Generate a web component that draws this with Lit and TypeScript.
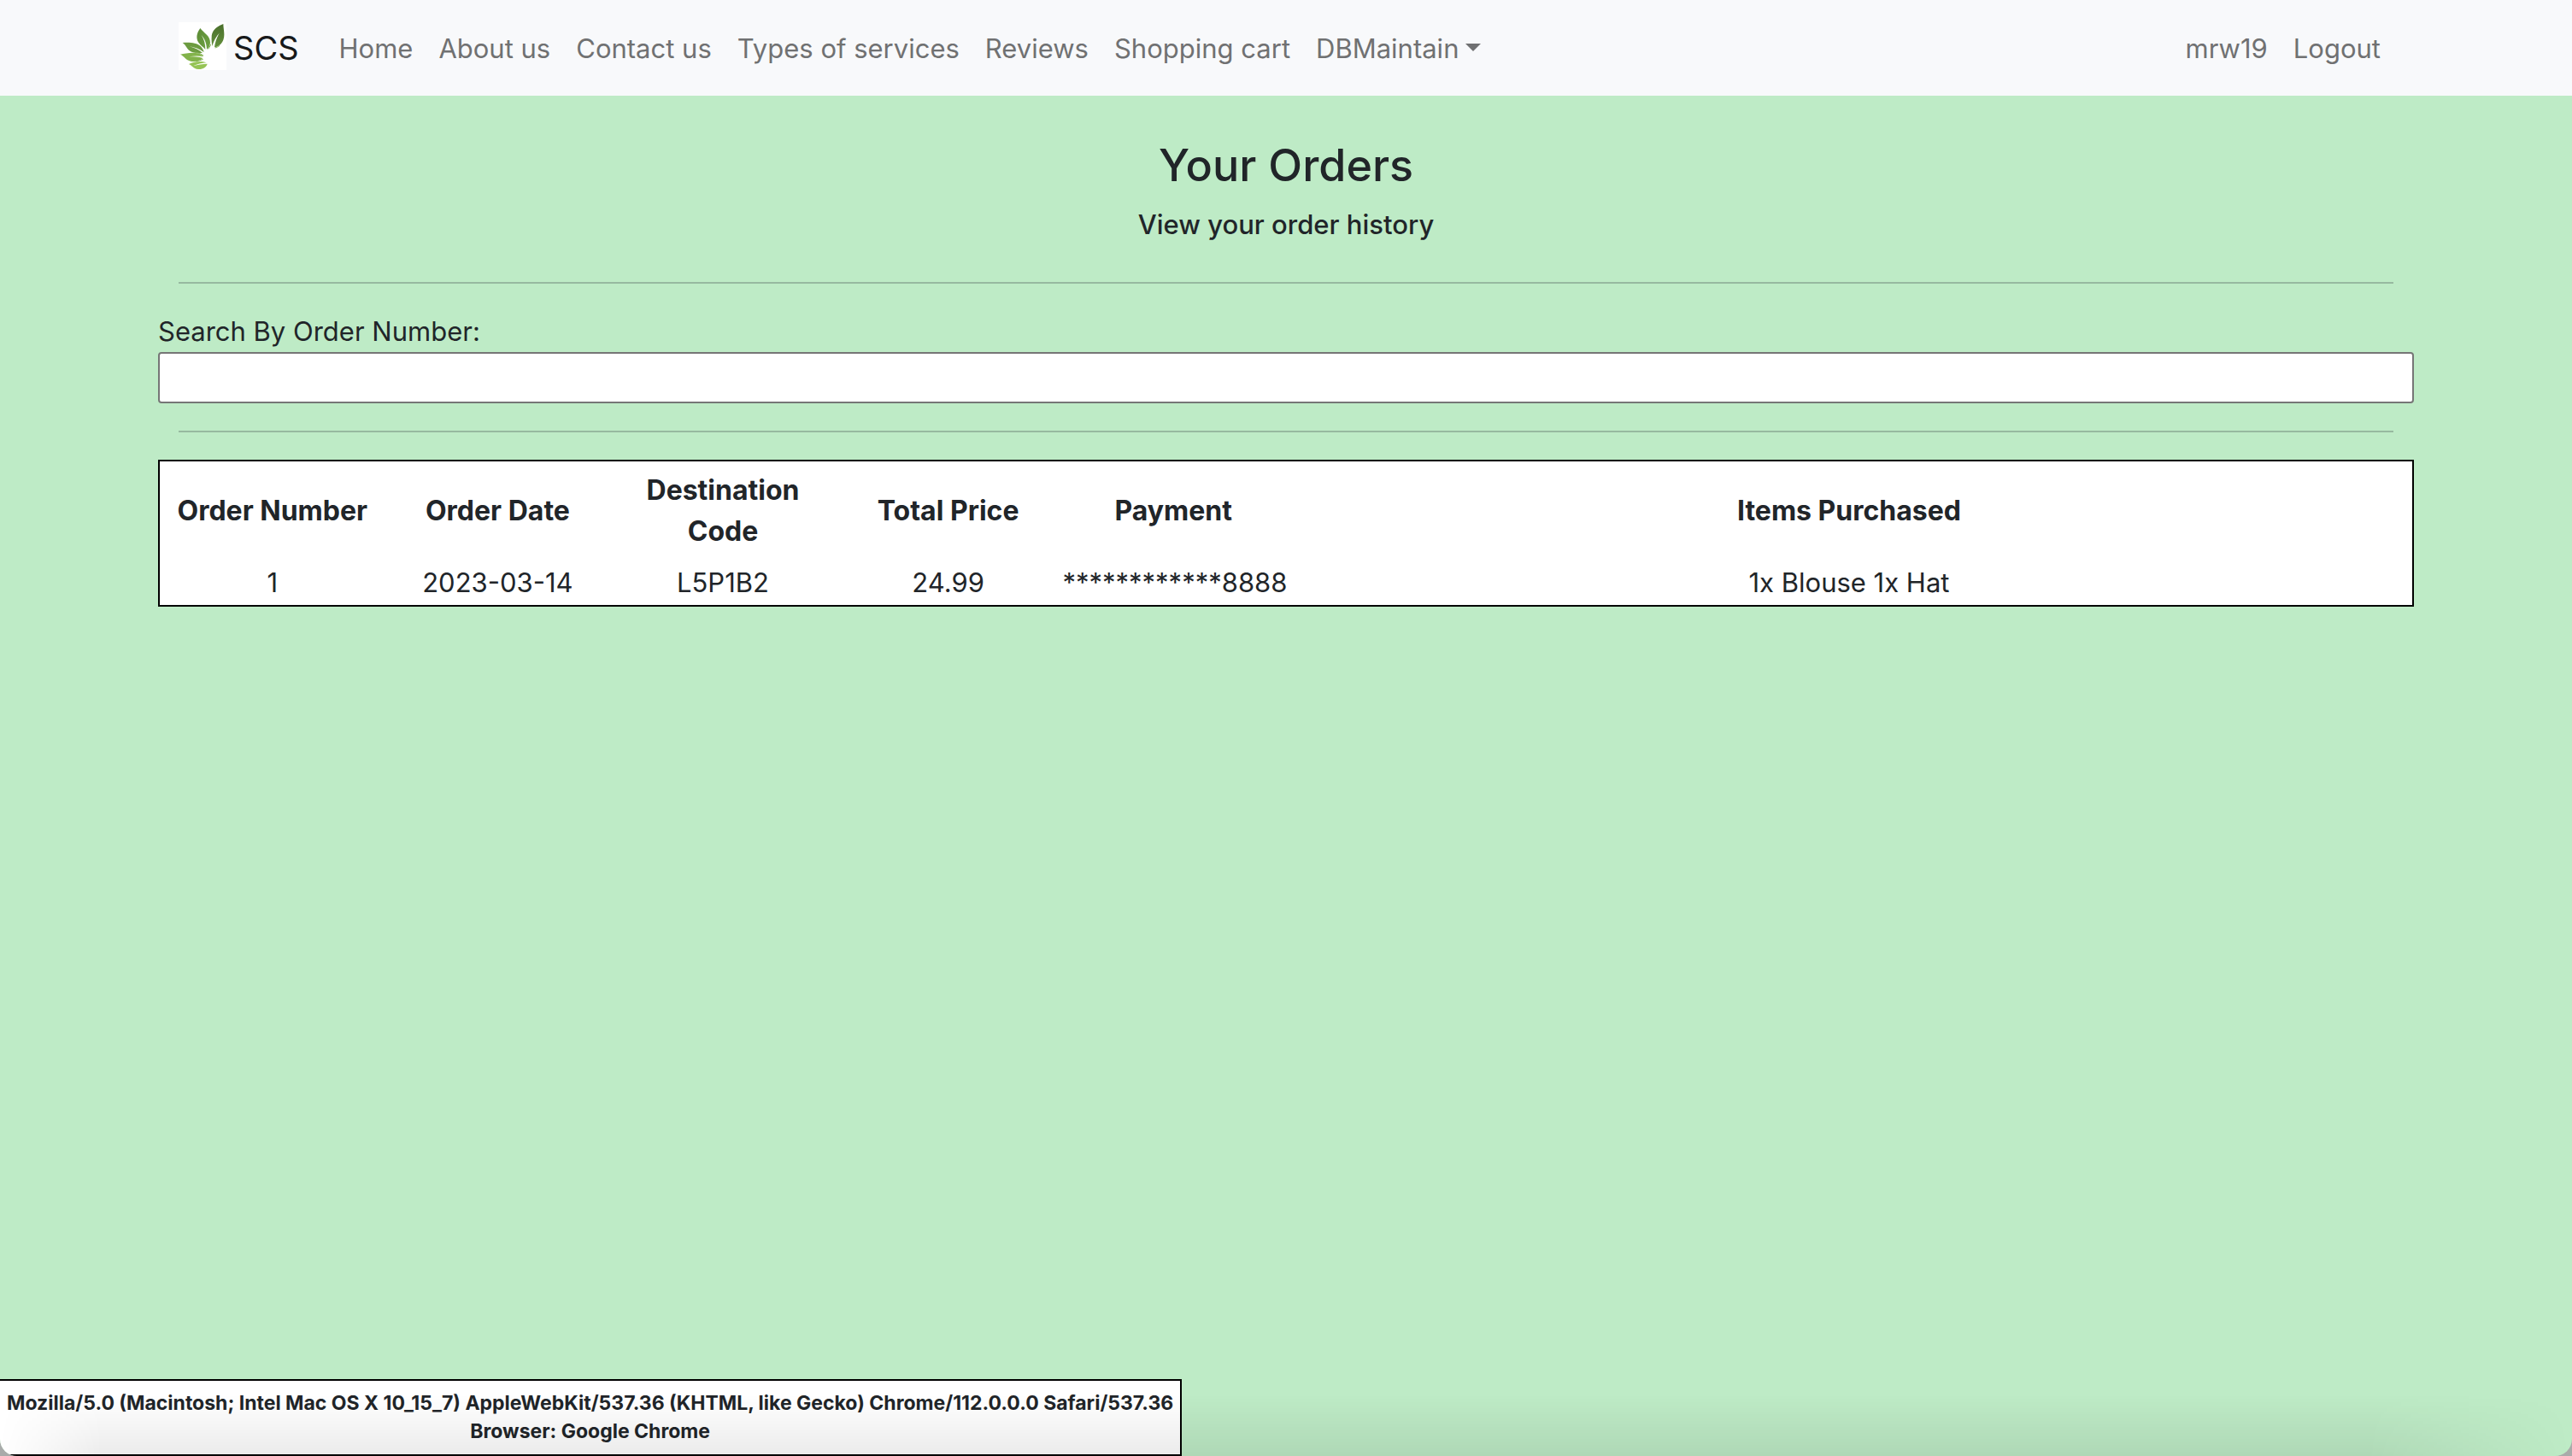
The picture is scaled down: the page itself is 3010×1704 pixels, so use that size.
import { LitElement, html, css, svg } from "lit";
import { customElement } from "lit/decorators.js";

interface Order {
  number: string;
  date: string;
  destination: string;
  total: string;
  payment: string;
  items: string;
}

const ORDERS: Order[] = [
  {
    number: "1",
    date: "2023-03-14",
    destination: "L5P1B2",
    total: "24.99",
    payment: "************8888",
    items: "1x Blouse 1x Hat",
  },
];

const LINKS = ["Home", "About us", "Contact us", "Types of services", "Reviews", "Shopping cart"];
const COLUMNS = ["Order Number", "Order Date", "Destination Code", "Total Price", "Payment", "Items Purchased"];

const logo = svg`
  <defs>
    <linearGradient id="a" x1="0" y1="0" x2="0" y2="1"><stop offset="0" stop-color="#4a6f2c"/><stop offset="1" stop-color="#63903c"/></linearGradient>
    <linearGradient id="b" x1="0" y1="0" x2="1" y2="1"><stop offset="0" stop-color="#5b8a35"/><stop offset="1" stop-color="#6fa343"/></linearGradient>
  </defs>
  <rect width="168" height="168" fill="#fff"/>
  <path fill="url(#a)" d="M157 6C132 15 116 29 116 53C115 66 117 76 118 84C122 72 127 56 143 38C134 54 128 70 126 88C141 86 152 76 157 62C164 43 157 24 157 6Z"/>
  <path fill="url(#b)" d="M76 21C63 38 61 56 69 70C76 82 87 87 94 96C94 76 90 61 80 45C93 60 98 75 99 95C105 91 111 83 111 71C111 47 88 38 76 21Z"/>
  <path fill="#6c9b40" d="M14 72C38 70 64 72 77 84C84 91 87 98 89 105C73 94 57 88 38 85C58 91 73 98 84 108C68 109 49 109 36 98C27 90 25 79 14 72Z"/>
  <path fill="#82b34a" d="M6 113C24 109 49 104 67 109C77 112 84 117 88 121C72 118 57 118 37 121C56 121 71 122 85 126C75 135 60 140 43 137C25 133 20 119 6 113Z"/>
  <path fill="#96c455" d="M36 147C53 138 78 134 98 142C82 143 65 148 51 154C68 149 84 146 101 146C98 157 86 166 69 165C50 164 48 151 36 147Z"/>
  <path fill="none" stroke="#83b052" stroke-width="3" d="M58 105Q76 108 87 117M61 137Q75 135 86 130M104 94Q109 88 113 78M128 90Q136 88 144 82"/>
`;

@customElement("app-root")
export class AppRoot extends LitElement {
  static styles = css`
    :host {
      display: block;
      min-height: 100vh;
      background: #a9abaa;
      color: #212529;
      font-family: Inter, "Liberation Sans", sans-serif;
      font-size: 31px;
      line-height: 48px;
    }
    * {
      box-sizing: border-box;
    }
    .page {
      display: flex;
      flex-direction: column;
      min-height: 100vh;
      position: relative;
      overflow: hidden;
      border-radius: 0 0 20px 20px;
      background: #beebc6;
    }
    .container {
      width: 100%;
      max-width: 2640px;
      margin: 0 auto;
    }
    .navbar {
      background: #f8f9fb;
    }
    .bar {
      display: flex;
      align-items: center;
      height: 112px;
      padding: 0 24px;
    }
    .brand {
      display: flex;
      align-items: center;
      gap: 8px;
      margin-right: 32px;
      color: #17191a;
      font-size: 38px;
      line-height: 60px;
      text-decoration: none;
    }
    .logo {
      width: 56px;
      height: 56px;
      margin-bottom: 4px;
    }
    .links {
      display: flex;
      margin: 0;
      padding: 2px 0 0;
      list-style: none;
    }
    .account {
      margin-left: auto;
    }
    .link {
      display: flex;
      align-items: center;
      gap: 8px;
      padding: 0 15px;
      border: 0;
      background: none;
      color: #707172;
      font: inherit;
      text-decoration: none;
    }
    .caret {
      margin-bottom: 4px;
      border: 9px solid transparent;
      border-top-color: currentColor;
      border-bottom: 0;
    }
    .intro {
      padding: 48px 0 16px;
      text-align: center;
    }
    .title,
    .subtitle {
      font-weight: 500;
    }
    .title {
      margin: 0 0 16px;
      font-size: 52px;
      line-height: 68px;
    }
    .subtitle {
      margin: 0;
      font-size: 31px;
      line-height: 38px;
    }
    .rule {
      height: 2px;
      margin: 32px 24px;
      border: 0;
      background: #97b9a0;
    }
    .label {
      display: block;
    }
    .search {
      display: block;
      width: 100%;
      height: 60px;
      padding: 2px 4px;
      border: 2px solid #767676;
      border-radius: 4px;
      background: #fff;
      color: inherit;
      font: inherit;
    }
    .orders {
      width: 100%;
      table-layout: fixed;
      border-collapse: separate;
      border-spacing: 0;
      border: 2px solid #000;
      background: #fff;
      text-align: center;
    }
    .head {
      width: 10%;
      padding: 10px;
      font-size: 32px;
      font-weight: 700;
    }
    .head:last-child {
      width: 50%;
    }
    .cell {
      padding: 2px;
    }
    .agent {
      align-self: flex-start;
      margin-top: auto;
      padding: 10px 8px;
      border: 2px solid #000;
      border-left: 0;
      background: #fff;
      font-size: 23px;
      line-height: 33px;
      font-weight: 700;
      text-align: center;
    }
    .agent-line {
      margin: 0;
    }
    .shade {
      position: absolute;
      right: 0;
      bottom: 0;
      left: 0;
      height: 72px;
      background: linear-gradient(to bottom, transparent, rgba(0, 0, 0, 0.08));
      -webkit-mask-image: linear-gradient(to right, transparent, #000 120px, #000 calc(100% - 240px), transparent);
      mask-image: linear-gradient(to right, transparent, #000 120px, #000 calc(100% - 240px), transparent);
      pointer-events: none;
    }
  `;

  render() {
    return html`
      <div class="page">
        <nav class="navbar">
          <div class="container bar">
            <a class="brand" href="#">
              <svg class="logo" viewBox="0 0 168 168" aria-hidden="true">${logo}</svg>
              <span>SCS</span>
            </a>
            <ul class="links">
              ${LINKS.map((text) => html`<li><a class="link" href="#">${text}</a></li>`)}
              <li>
                <button class="link" type="button" aria-haspopup="true">DBMaintain<span class="caret"></span></button>
              </li>
            </ul>
            <ul class="links account">
              <li><a class="link" href="#">mrw19</a></li>
              <li><a class="link" href="#">Logout</a></li>
            </ul>
          </div>
        </nav>
        <main class="container">
          <header class="intro">
            <h2 class="title">Your Orders</h2>
            <h6 class="subtitle">View your order history</h6>
          </header>
          <hr class="rule" />
          <label class="label" for="order-number">Search By Order Number:</label>
          <input class="search" id="order-number" type="text" />
          <hr class="rule" />
          <table class="orders">
            <thead>
              <tr>
                ${COLUMNS.map((name) => html`<th class="head" scope="col">${name}</th>`)}
              </tr>
            </thead>
            <tbody>
              ${ORDERS.map(
                (order) => html`<tr>
                  <td class="cell">${order.number}</td>
                  <td class="cell">${order.date}</td>
                  <td class="cell">${order.destination}</td>
                  <td class="cell">${order.total}</td>
                  <td class="cell">${order.payment}</td>
                  <td class="cell">${order.items}</td>
                </tr>`,
              )}
            </tbody>
          </table>
        </main>
        <footer class="agent">
          <p class="agent-line">
            Mozilla/5.0 (Macintosh; Intel Mac OS X 10_15_7) AppleWebKit/537.36 (KHTML, like Gecko) Chrome/112.0.0.0 Safari/537.36
          </p>
          <p class="agent-line">Browser: Google Chrome</p>
        </footer>
        <div class="shade"></div>
      </div>
    `;
  }
}
